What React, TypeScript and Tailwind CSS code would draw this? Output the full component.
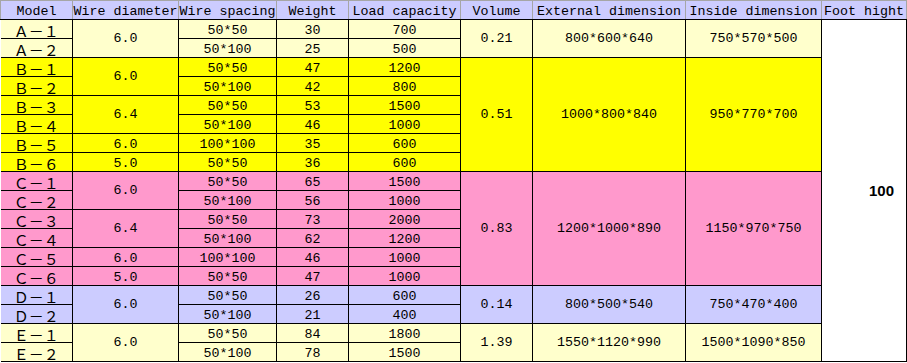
type Row = {
  model: string;
  dia?: [string, number];
  spacing: string;
  weight: string;
  load: string;
  vol?: [string, number];
  ext?: string;
  ins?: string;
  bg: string;
};

const A = "bg-[#ffffcc]";
const B = "bg-[#ffff00]";
const C = "bg-[#ff99cc]";
const D = "bg-[#ccccff]";

const rows: Row[] = [
  { model: "Ａ－１", dia: ["6.0", 2], spacing: "50*50", weight: "30", load: "700", vol: ["0.21", 2], ext: "800*600*640", ins: "750*570*500", bg: A },
  { model: "Ａ－２", spacing: "50*100", weight: "25", load: "500", bg: A },
  { model: "Ｂ－１", dia: ["6.0", 2], spacing: "50*50", weight: "47", load: "1200", vol: ["0.51", 6], ext: "1000*800*840", ins: "950*770*700", bg: B },
  { model: "Ｂ－２", spacing: "50*100", weight: "42", load: "800", bg: B },
  { model: "Ｂ－３", dia: ["6.4", 2], spacing: "50*50", weight: "53", load: "1500", bg: B },
  { model: "Ｂ－４", spacing: "50*100", weight: "46", load: "1000", bg: B },
  { model: "Ｂ－５", dia: ["6.0", 1], spacing: "100*100", weight: "35", load: "600", bg: B },
  { model: "Ｂ－６", dia: ["5.0", 1], spacing: "50*50", weight: "36", load: "600", bg: B },
  { model: "Ｃ－１", dia: ["6.0", 2], spacing: "50*50", weight: "65", load: "1500", vol: ["0.83", 6], ext: "1200*1000*890", ins: "1150*970*750", bg: C },
  { model: "Ｃ－２", spacing: "50*100", weight: "56", load: "1000", bg: C },
  { model: "Ｃ－３", dia: ["6.4", 2], spacing: "50*50", weight: "73", load: "2000", bg: C },
  { model: "Ｃ－４", spacing: "50*100", weight: "62", load: "1200", bg: C },
  { model: "Ｃ－５", dia: ["6.0", 1], spacing: "100*100", weight: "46", load: "1000", bg: C },
  { model: "Ｃ－６", dia: ["5.0", 1], spacing: "50*50", weight: "47", load: "1000", bg: C },
  { model: "Ｄ－１", dia: ["6.0", 2], spacing: "50*50", weight: "26", load: "600", vol: ["0.14", 2], ext: "800*500*540", ins: "750*470*400", bg: D },
  { model: "Ｄ－２", spacing: "50*100", weight: "21", load: "400", bg: D },
  { model: "Ｅ－１", dia: ["6.0", 2], spacing: "50*50", weight: "84", load: "1800", vol: ["1.39", 2], ext: "1550*1120*990", ins: "1500*1090*850", bg: A },
  { model: "Ｅ－２", spacing: "50*100", weight: "78", load: "1500", bg: A },
];

const headers = [
  "Model",
  "Wire diameter",
  "Wire spacing",
  "Weight",
  "Load capacity",
  "Volume",
  "External dimension",
  "Inside dimension",
  "Foot hight",
];

const widths = [72, 106, 98, 72, 112, 72, 153, 136, 85];

const cell = "border border-black p-0 pt-[2px] text-center align-middle whitespace-nowrap";
const span = "border border-black p-0 text-center align-middle whitespace-nowrap";

export default function App() {
  return (
    <div className="w-[907px] h-[363px] bg-white overflow-hidden text-black font-['Liberation_Mono',monospace] text-[13.33px] leading-[13px]">
      <table className="table-fixed border-collapse w-[906px]">
        <colgroup>
          {widths.map((w, i) => (
            <col key={i} style={{ width: w }} />
          ))}
        </colgroup>
        <thead>
          <tr className="h-[19px] bg-[#ccccff]">
            {headers.map((h) => (
              <th
                key={h}
                className="border-x border-x-[#a6a6a6] border-t border-t-[#a6a6a6] border-b border-b-black p-0 pt-[2px] font-normal text-center whitespace-nowrap overflow-hidden"
              >
                {h}
              </th>
            ))}
          </tr>
        </thead>
        <tbody>
          {rows.map((r, i) => (
            <tr key={r.model} className={`h-[19px] ${r.bg}`}>
              <td className={`${cell} border-l-0 font-['Noto_Sans_CJK_SC',sans-serif] text-[15px] leading-[13px]`}>{r.model}</td>
              {r.dia && (
                <td rowSpan={r.dia[1]} className={r.dia[1] > 1 ? span : cell}>
                  {r.dia[0]}
                </td>
              )}
              <td className={cell}>{r.spacing}</td>
              <td className={cell}>{r.weight}</td>
              <td className={cell}>{r.load}</td>
              {r.vol && (
                <td rowSpan={r.vol[1]} className={span}>
                  {r.vol[0]}
                </td>
              )}
              {r.ext && (
                <td rowSpan={r.vol ? r.vol[1] : 1} className={span}>
                  {r.ext}
                </td>
              )}
              {r.ins && (
                <td rowSpan={r.vol ? r.vol[1] : 1} className={span}>
                  {r.ins}
                </td>
              )}
              {i === 0 && (
                <td
                  rowSpan={18}
                  className="border border-black bg-white p-0 pr-[12px] text-right align-middle font-['Liberation_Sans',sans-serif] font-bold text-[15px]"
                >
                  100
                </td>
              )}
            </tr>
          ))}
        </tbody>
      </table>
    </div>
  );
}
